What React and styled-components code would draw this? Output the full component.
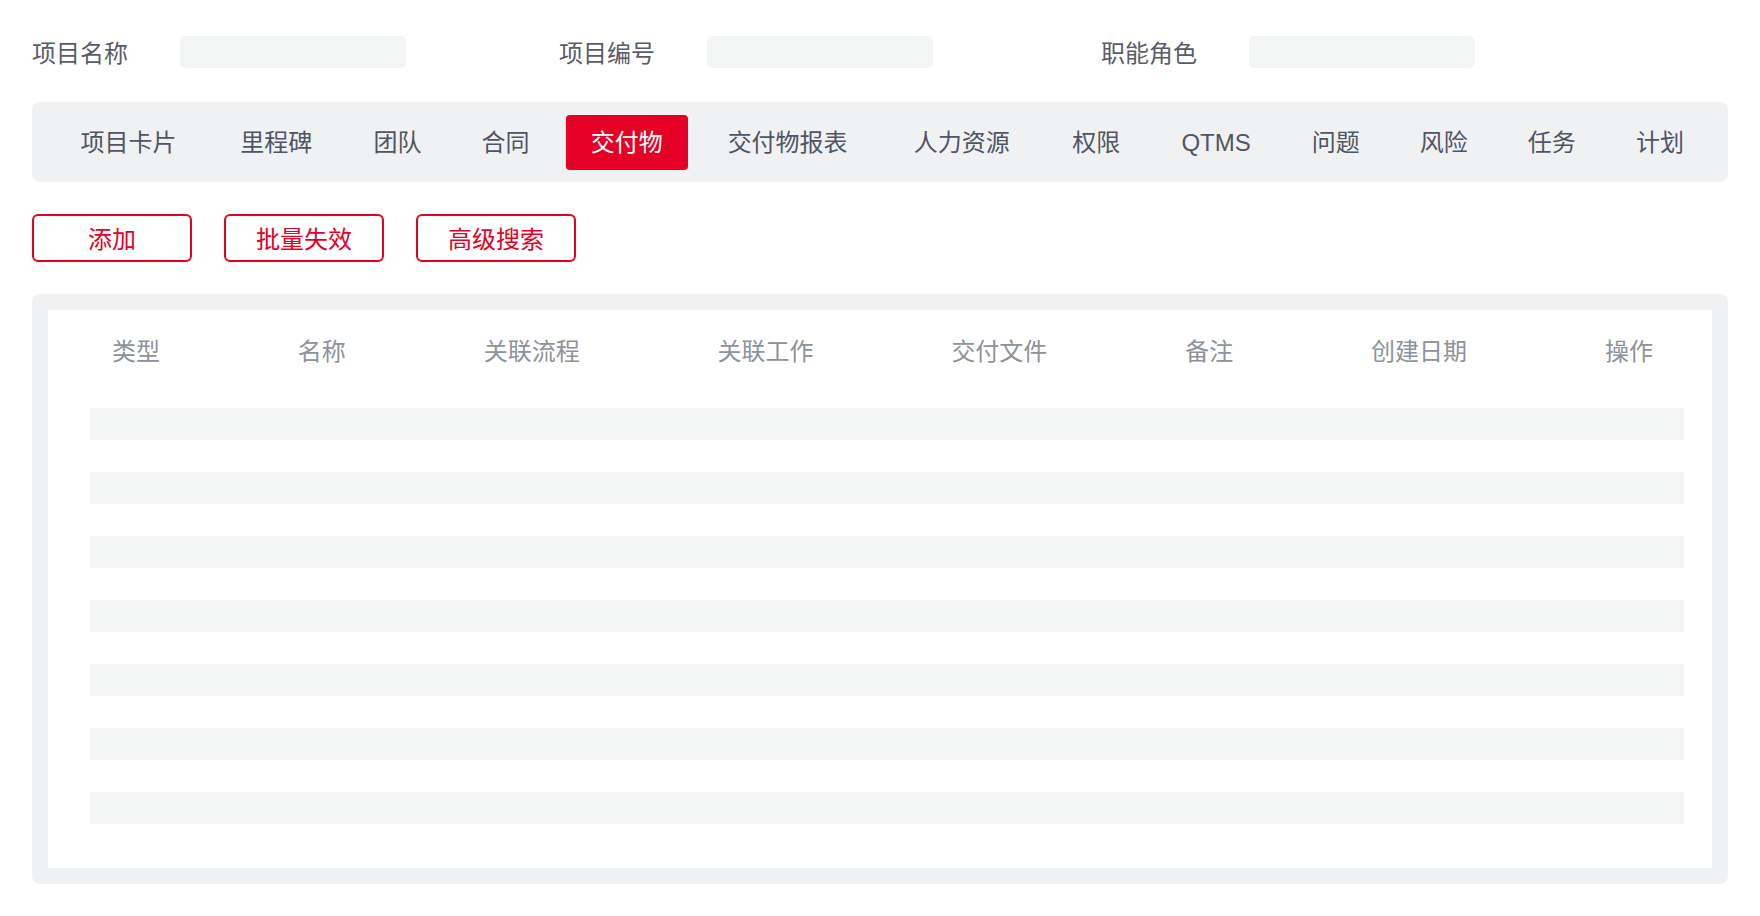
import React from "react";
import styled, { createGlobalStyle } from "styled-components";

const GlobalStyle = createGlobalStyle`
  * {
    box-sizing: border-box;
  }
  body {
    margin: 0;
    background: #ffffff;
    font-family: "Liberation Sans", "Noto Sans CJK SC", sans-serif;
  }
`;

const Page = styled.div`
  width: 1760px;
  padding: 36px 32px 0 32px;
`;

const FilterRow = styled.div`
  display: flex;
  align-items: center;
  height: 32px;
`;

const FilterGroup = styled.div`
  display: flex;
  align-items: center;
  margin-left: ${(p) => p.$offset || 0}px;
`;

const Label = styled.div`
  width: 148px;
  padding-top: 4px;
  font-size: 24px;
  line-height: 32px;
  color: #585d69;
`;

const Input = styled.div`
  width: 226px;
  height: 32px;
  border-radius: 5px;
  background-color: #f4f5f5;
`;

const TabBar = styled.div`
  margin-top: 34px;
  height: 80px;
  padding: 0 14px 0 16px;
  display: flex;
  align-items: center;
  background-color: #f0f1f3;
  border-radius: 8px;
`;

// auto table layout: spare width is shared in proportion to each tab's text
const TabTable = styled.div`
  display: table;
  width: 100%;
`;

const Tab = styled.div`
  display: table-cell;
  padding: 0 25px;
  text-align: center;
  vertical-align: middle;
  white-space: nowrap;
  cursor: pointer;
`;

const TabLabel = styled.span`
  display: inline-block;
  height: 55px;
  padding: 13px 25px 0;
  margin: 0 -25px;
  font-size: 24px;
  line-height: 30px;
  border-radius: 4px;
  color: ${(p) => (p.$active ? "#ffffff" : "#4f5563")};
  background-color: ${(p) => (p.$active ? "#e60026" : "transparent")};
`;

const Actions = styled.div`
  margin-top: 32px;
  display: flex;
  gap: 32px;
`;

const Button = styled.button`
  width: 160px;
  height: 48px;
  padding: 3px 0 0;
  border: 2px solid #e60026;
  border-radius: 6px;
  background-color: #ffffff;
  color: #e60026;
  font-family: inherit;
  font-size: 24px;
  line-height: 30px;
  cursor: pointer;
`;

const TableFrame = styled.div`
  margin-top: 32px;
  padding: 16px;
  background-color: #f0f1f3;
  border-radius: 8px;
`;

const TableBody = styled.div`
  height: 558px;
  background-color: #ffffff;
  padding: 27px 28px 0 42px;
`;

const HeaderRow = styled.div`
  display: flex;
  justify-content: space-between;
  margin: 0 31px 0 22px;
  height: 30px;
`;

const HeaderCell = styled.div`
  font-size: 24px;
  line-height: 30px;
  color: #8d929b;
`;

const Rows = styled.div`
  margin-top: 41px;
  display: flex;
  flex-direction: column;
  gap: 32px;
`;

const Row = styled.div`
  height: 32px;
  background-color: #f4f5f5;
`;

const tabs = [
  "项目卡片",
  "里程碑",
  "团队",
  "合同",
  "交付物",
  "交付物报表",
  "人力资源",
  "权限",
  "QTMS",
  "问题",
  "风险",
  "任务",
  "计划",
];

const columns = ["类型", "名称", "关联流程", "关联工作", "交付文件", "备注", "创建日期", "操作"];

export default function App() {
  return (
    <>
      <GlobalStyle />
      <Page>
        <FilterRow>
          <FilterGroup>
            <Label>项目名称</Label>
            <Input />
          </FilterGroup>
          <FilterGroup $offset={153}>
            <Label>项目编号</Label>
            <Input />
          </FilterGroup>
          <FilterGroup $offset={168}>
            <Label>职能角色</Label>
            <Input />
          </FilterGroup>
        </FilterRow>

        <TabBar>
          <TabTable>
            {tabs.map((t) => (
              <Tab key={t}>
                <TabLabel $active={t === "交付物"}>{t}</TabLabel>
              </Tab>
            ))}
          </TabTable>
        </TabBar>

        <Actions>
          <Button>添加</Button>
          <Button>批量失效</Button>
          <Button>高级搜索</Button>
        </Actions>

        <TableFrame>
          <TableBody>
            <HeaderRow>
              {columns.map((c) => (
                <HeaderCell key={c}>{c}</HeaderCell>
              ))}
            </HeaderRow>
            <Rows>
              {Array.from({ length: 7 }).map((_, i) => (
                <Row key={i} />
              ))}
            </Rows>
          </TableBody>
        </TableFrame>
      </Page>
    </>
  );
}
